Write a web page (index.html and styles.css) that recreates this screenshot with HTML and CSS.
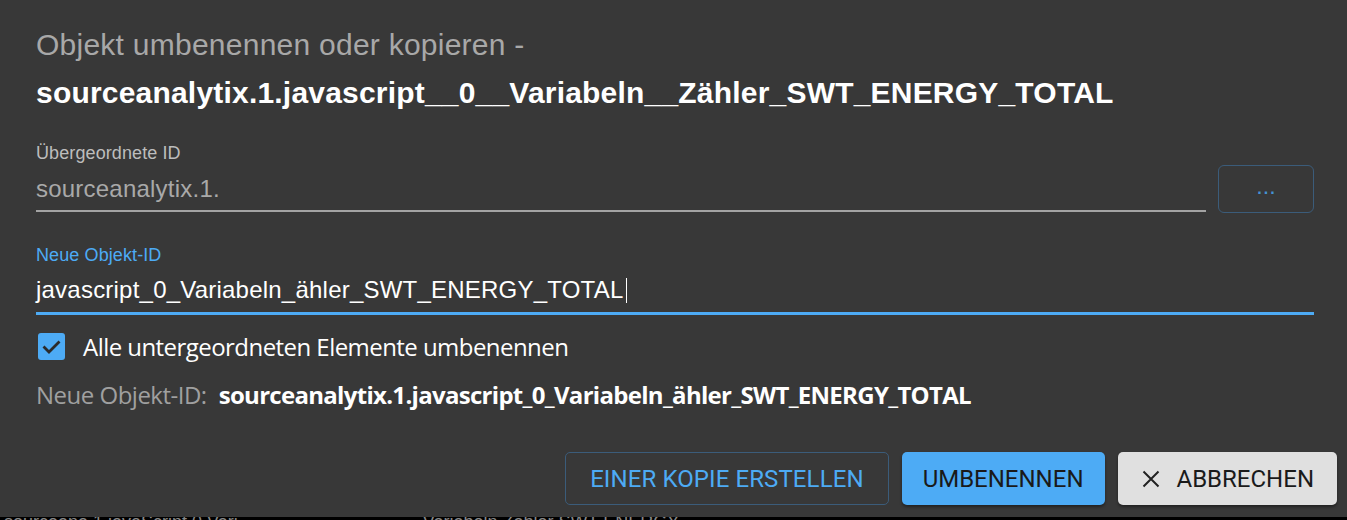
FILE: index.html
```html
<!DOCTYPE html>
<html lang="de">
<head>
    <meta charset="UTF-8">
    <title>Objekt umbenennen oder kopieren</title>
    <link rel="stylesheet" href="styles.css">
</head>
<body>
    <div class="dialog">
        <div class="title">
            <div class="title-main">Objekt umbenennen oder kopieren -</div>
            <div class="title-id">sourceanalytix.1.javascript__0__Variabeln__Zähler_SWT_ENERGY_TOTAL</div>
        </div>

        <div class="row">
            <div class="field">
                <label class="field-label">Übergeordnete ID</label>
                <div class="field-input disabled">sourceanalytix.1.</div>
            </div>
            <button class="btn-dots">...</button>
        </div>

        <div class="field focused">
            <label class="field-label">Neue Objekt-ID</label>
            <div class="field-input">javascript_0_Variabeln_ähler_SWT_ENERGY_TOTAL<span class="caret"></span></div>
        </div>

        <label class="check">
            <span class="check-box">
                <svg width="27" height="27" viewBox="0 0 27 27">
                    <rect x="0" y="0" width="27" height="27" rx="3" fill="#4dabf5"/>
                    <path d="M5.5 13.5 L11 19 L21.5 8.5" fill="none" stroke="#2b2b2b" stroke-width="2.8"/>
                </svg>
            </span>
            <span class="check-text">Alle untergeordneten Elemente umbenennen</span>
        </label>

        <div class="preview">
            <span class="preview-label">Neue Objekt-ID:</span>
            <span class="preview-value">sourceanalytix.1.javascript_0_Variabeln_ähler_SWT_ENERGY_TOTAL</span>
        </div>

        <div class="actions">
            <button class="btn outlined">Einer Kopie erstellen</button>
            <button class="btn primary">Umbenennen</button>
            <button class="btn grey">
                <svg width="18" height="18" viewBox="0 0 18 18">
                    <path d="M1.5 1.5 L16.5 16.5 M16.5 1.5 L1.5 16.5" stroke="#222" stroke-width="2"/>
                </svg>
                Abbrechen
            </button>
        </div>
    </div>
    <div class="under">
        <span class="under-a">sourceana 1 javaScript 0 Vari</span>
        <span class="under-b">Variabeln Zähler SWT ENERGY</span>
    </div>
</body>
</html>
```

FILE: styles.css
```css
body {
    margin: 0;
    padding: 0;
    background: #000;
    font-family: "Liberation Sans", Arial, sans-serif;
    overflow: hidden;
}

.dialog {
    height: 517px;
    box-sizing: border-box;
    background: #383838;
    padding: 0 10px 0 36px;
    display: flex;
    flex-direction: column;
}

/* title */
.title {
    padding-top: 27px;
    font-size: 30px;
    letter-spacing: 0.25px;
}

.title-main {
    color: #a8a8a8;
    line-height: 36px;
}

.title-id {
    color: #fff;
    font-weight: bold;
    margin-top: 12px;
    line-height: 36px;
    letter-spacing: 0.2px;
}

/* text fields */
.row {
    display: flex;
    align-items: flex-end;
    gap: 12px;
    margin-top: 32px;
    margin-right: 23px;
}

.row .field {
    flex: 1;
}

.field-label {
    display: block;
    font-size: 18px;
    line-height: 20px;
    color: #bdbdbd;
    letter-spacing: 0.1px;
}

.field-input {
    font-size: 24px;
    line-height: 28px;
    color: #fff;
    letter-spacing: 0.22px;
    padding: 12px 0 7px;
    border-bottom: 2px solid #a3a3a3;
}

.field-input.disabled {
    color: #a9a9a9;
}

.btn-dots {
    width: 96px;
    height: 48px;
    margin-bottom: -1px;
    background: transparent;
    border: 1px solid #3b5c7a;
    border-radius: 6px;
    color: #4592d4;
    font-family: "Liberation Sans", Arial, sans-serif;
    font-size: 16px;
    font-weight: bold;
    letter-spacing: 2px;
    padding: 0 0 0 2px;
}

.focused {
    margin-top: 33px;
    margin-right: 23px;
}

.focused .field-label {
    color: #4dabf5;
}

.focused .field-input {
    padding: 11px 0 8px;
    border-bottom: 3px solid #4dabf5;
}

.caret {
    display: inline-block;
    width: 1px;
    height: 25px;
    margin-left: 2px;
    background: #fff;
    vertical-align: -5px;
}

/* checkbox */
.check {
    display: flex;
    align-items: center;
    gap: 18px;
    margin-top: 18px;
    margin-left: 2px;
    height: 27px;
}

.check-box {
    display: flex;
}

.check-text {
    font-family: "Open Sans", sans-serif;
    font-size: 24px;
    line-height: 27px;
    color: #fff;
    letter-spacing: -0.55px;
}

.preview {
    margin-top: 21px;
    display: flex;
    gap: 12px;
    align-items: baseline;
    font-family: "Open Sans", sans-serif;
    font-size: 24px;
    line-height: 28px;
}

.preview-label {
    color: #a0a0a0;
    letter-spacing: -0.5px;
}

.preview-value {
    font-weight: bold;
    color: #fff;
    letter-spacing: -0.7px;
}

/* buttons */
.actions {
    margin-top: auto;
    margin-bottom: 12px;
    display: flex;
    justify-content: flex-end;
    gap: 13px;
}

.btn {
    height: 53px;
    border-radius: 5px;
    font-family: Roboto, sans-serif;
    font-size: 24px;
    text-transform: uppercase;
    padding: 0 24px;
    display: flex;
    align-items: center;
    gap: 17px;
    border: none;
}

.btn.outlined {
    background: transparent;
    border: 1px solid #3b5c7a;
    color: #4dabf5;
    letter-spacing: 0.1px;
}

.btn.primary {
    background: #4dabf5;
    color: #1a1a1a;
    padding: 0 21px;
    box-shadow: 0 2px 3px rgba(0, 0, 0, 0.4);
}

.btn.grey {
    background: #e0e0e0;
    color: #1a1a1a;
    padding: 0 23px 0 24px;
    box-shadow: 0 2px 3px rgba(0, 0, 0, 0.4);
}

.under {
    height: 3px;
    overflow: hidden;
    color: #888;
    font-size: 18px;
    line-height: 10px;
    white-space: nowrap;
}

.under-a {
    margin-left: 4px;
}

.under-b {
    margin-left: 180px;
}
```
